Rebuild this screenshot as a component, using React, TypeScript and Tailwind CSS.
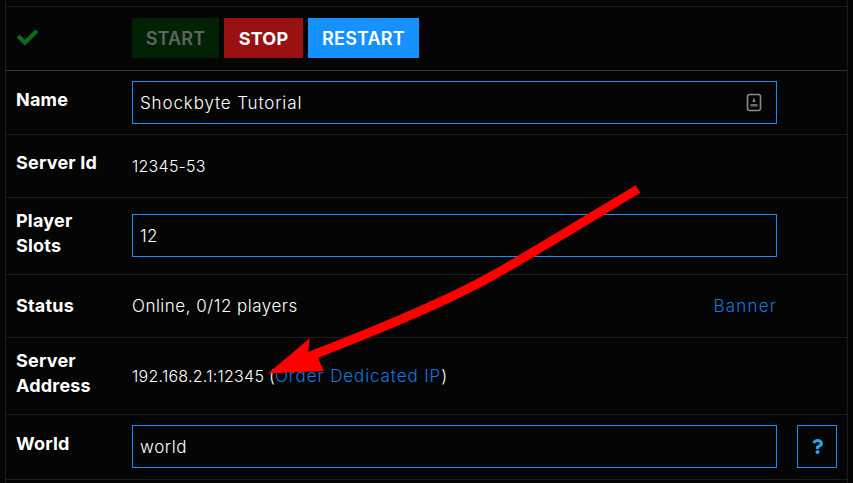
import { FaCheck, FaQuestion } from "react-icons/fa";

function Row({ label, h, children, strong, labelPad = "pb-[6px]", valuePad = "" }: { label: React.ReactNode; h: string; children: React.ReactNode; strong?: boolean; labelPad?: string; valuePad?: string }) {
  return (
    <div className={`flex items-center border-b ${strong ? "border-[#333333]" : "border-[#1c1c1c]"} ${h}`}>
      <div className={`w-[126px] shrink-0 pl-[10px] text-[18px] leading-[25px] font-bold tracking-[0.2px] text-white ${labelPad}`}>{label}</div>
      <div className={`flex-1 flex items-center min-w-0 ${valuePad}`}>{children}</div>
    </div>
  );
}

function Field({ value, icon, tracking }: { value: string; icon?: boolean; tracking: string }) {
  return (
    <div className={`flex items-center justify-between w-[645px] h-[43px] border border-[#1a8cff] pl-[7px] pr-[14px] text-[17px] font-light text-white ${tracking}`}>
      <span className="pt-[3px]">{value}</span>
      {icon && (
        <svg width="16" height="19" viewBox="0 0 16 19" fill="none">
          <rect x="1.5" y="1.5" width="13" height="16" rx="2" stroke="#8a8a8a" strokeWidth="1.6" />
          <path d="M8 4.5 L9.6 9 H6.4 Z" fill="#8a8a8a" />
          <rect x="4.5" y="11" width="7" height="2.5" fill="#6a6a6a" />
        </svg>
      )}
    </div>
  );
}

export default function App() {
  return (
    <div className="relative w-[853px] h-[483px] overflow-hidden bg-[#050505] font-['Inter','Liberation_Sans',sans-serif]">
      <div className="ml-[5px] pt-[6px] w-[843px] h-[483px] border-l border-r border-[#1c1c1c]">
        <div className="border-t border-[#1c1c1c]">
          <Row label="" h="h-[64px]" strong valuePad="pb-[1px]">
            <div className="flex gap-[5px] text-[18px] font-semibold">
              <div className="w-[87px] h-[40px] flex items-center justify-center bg-[#032205] text-[#5f655f] tracking-[0.2px]">START</div>
              <div className="w-[79px] h-[40px] flex items-center justify-center bg-[#9a1111] text-white font-bold tracking-[0.2px]">STOP</div>
              <div className="w-[111px] h-[40px] flex items-center justify-center bg-[#1592ff] text-white tracking-[0.2px]">RESTART</div>
            </div>
          </Row>
          <Row label="Name" h="h-[64px]"><Field value="Shockbyte Tutorial" icon tracking="tracking-[0.87px]" /></Row>
          <Row label="Server Id" h="h-[63px]" labelPad="pb-[7px]"><span className="text-[16px] font-light text-white tracking-[0.25px]">12345-53</span></Row>
          <Row label={<>Player<br />Slots</>} h="h-[77px]" valuePad="pb-[1px]"><Field value="12" tracking="tracking-[0.4px]" /></Row>
          <Row label="Status" h="h-[63px]" labelPad="pb-[1px]" valuePad="pt-[2px]">
            <div className="flex justify-between w-[645px] text-[17px] font-light">
              <span className="text-white tracking-[0.5px]">Online, 0/12 players</span>
              <span className="text-[#1277e0] tracking-[1.2px]">Banner</span>
            </div>
          </Row>
          <Row label={<>Server<br />Address</>} h="h-[77px]" valuePad="pt-[2px]">
            <span className="text-[16px] font-light text-white tracking-[0.25px]">192.168.2.1:12345 <span className="text-[17px]">(</span><span className="text-[17px] text-[#1277e0] tracking-[0.9px]">Order Dedicated IP</span><span className="text-[17px]">)</span></span>
          </Row>
          <Row label="World" h="h-[65px]" labelPad="pb-[8px]" valuePad="pb-[1px]">
            <Field value="world" tracking="tracking-[0.6px]" />
            <div className="ml-[20px] w-[40px] h-[43px] border border-[#1a8cff] flex items-center justify-center text-[#2aa3ea]">
              <FaQuestion size={15} />
            </div>
          </Row>
        </div>
      </div>
      <FaCheck size={21} className="absolute left-[17px] top-[27px] text-[#0b6b1c]" />
      <svg className="absolute left-0 top-0 pointer-events-none" width="853" height="483" viewBox="0 0 853 483" fill="none">
        <path d="M638 189 C 590 218, 533 253, 490 277 C 440 305, 370 333, 305 358" stroke="#ff0000" strokeWidth="9" />
        <path d="M268 373.5 L310 338 L308 353 L318 358 L324 371 Z" fill="#ff0000" />
      </svg>
    </div>
  );
}
